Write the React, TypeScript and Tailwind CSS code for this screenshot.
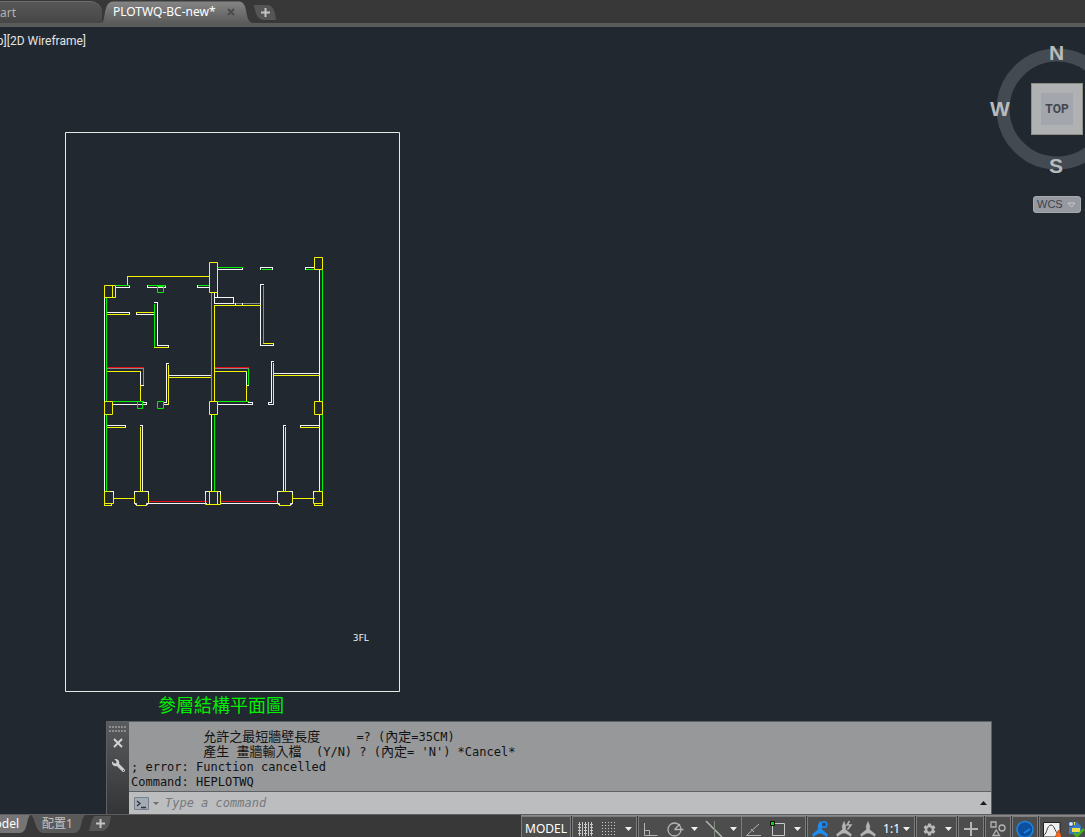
import React from 'react';
import { FaWrench } from 'react-icons/fa';
import { MdSettings } from 'react-icons/md';

const COLORS = {
  w: '#f4f4f4',
  y: '#f4f400',
  g: '#00f000',
  r: '#e80c14',
  s: '#8a8d90',
};

type Tone = keyof typeof COLORS;

// x1, y1, x2, y2 in drawing units
const WALLS: Record<Tone, number[][]> = {
  s: [
    [106, 368, 143, 368], [214, 368, 248, 368], [233, 303, 260, 303],
  ],
  r: [
    [106, 367, 143, 367], [214, 367, 248, 367], [148, 501, 206, 501], [220, 501, 277, 501],
  ],
  w: [
    [116, 287, 129, 287], [129, 285, 129, 287],
    [147, 287, 165, 287], [147, 285, 147, 287], [165, 285, 165, 287],
    [197, 287, 209, 287], [197, 285, 197, 287],
    [104, 297, 104, 401], [104, 414, 104, 491],
    [106, 312, 129, 312], [129, 312, 129, 314],
    [136, 314, 154, 314], [136, 312, 136, 314],
    [154, 302, 157, 302], [157, 302, 157, 345], [157, 345, 168, 345], [168, 345, 168, 347],
    [140, 371, 140, 385], [140, 385, 143, 385],
    [166, 363, 168, 363], [166, 363, 166, 402], [164, 402, 166, 402], [164, 404, 168, 404],
    [168, 375, 211, 375],
    [113, 404, 146, 404], [143, 402, 146, 402], [146, 402, 146, 404],
    [106, 425, 125, 425], [125, 425, 125, 427],
    [140, 425, 142, 425], [142, 425, 142, 491],
    [148, 503, 206, 503], [220, 503, 277, 503],
    [211, 414, 211, 491],
    [218, 269, 242, 269], [242, 267, 242, 269],
    [260, 267, 272, 267], [260, 267, 260, 269], [272, 267, 272, 269],
    [305, 267, 314, 267], [305, 267, 305, 269],
    [260, 284, 263, 284], [260, 284, 260, 345], [260, 345, 273, 345], [273, 343, 273, 345],
    [214, 292, 214, 303], [217, 292, 217, 297], [214, 297, 233, 297], [233, 297, 233, 303], [214, 303, 233, 303],
    [235, 303, 235, 305], [242, 303, 242, 305],
    [246, 371, 246, 385], [246, 385, 248, 385],
    [218, 404, 252, 404], [248, 402, 252, 402], [252, 402, 252, 404],
    [271, 361, 273, 361], [271, 361, 271, 402], [268, 402, 271, 402], [268, 402, 268, 404], [268, 404, 273, 404],
    [273, 373, 319, 373],
    [319, 270, 319, 401], [319, 414, 319, 491],
    [300, 425, 319, 425], [300, 425, 300, 427],
    [283, 425, 285, 425], [283, 425, 283, 491],
  ],
  y: [
    [127, 276, 209, 276], [127, 276, 127, 285],
    [112, 285, 112, 297],
    [106, 314, 129, 314], [136, 312, 154, 312], [154, 347, 168, 347],
    [106, 371, 140, 371], [140, 385, 140, 401],
    [168, 365, 168, 404], [168, 377, 211, 377],
    [106, 427, 125, 427], [140, 427, 140, 491],
    [113, 498, 134, 498], [293, 498, 314, 498],
    [214, 305, 260, 305], [214, 305, 214, 401],
    [214, 371, 246, 371], [246, 385, 246, 401],
    [263, 343, 273, 343], [273, 363, 273, 404], [273, 375, 319, 375],
    [300, 427, 319, 427], [285, 427, 285, 491],
    [104, 503, 104, 505], [104, 505, 111, 505], [111, 503, 111, 505],
    [314, 503, 314, 505], [314, 505, 322, 505], [322, 503, 322, 505],
  ],
  g: [
    [116, 285, 129, 285], [148, 285, 165, 285], [198, 285, 209, 285],
    [106, 297, 106, 401], [106, 414, 106, 491],
    [154, 304, 154, 346], [143, 369, 143, 384],
    [113, 401, 143, 401], [218, 401, 248, 401],
    [211, 292, 211, 401], [214, 414, 214, 491],
    [218, 267, 242, 267], [262, 269, 271, 269], [306, 269, 314, 269],
    [263, 286, 263, 342], [248, 369, 248, 384],
    [322, 270, 322, 401], [322, 414, 322, 491],
  ],
};

// x, y, width, height
const COLUMNS = [
  [104, 285, 11, 12], [209, 262, 8, 30], [314, 257, 8, 12],
  [104, 401, 8, 13], [209, 401, 8, 13], [314, 401, 8, 13],
  [104, 491, 9, 12], [209, 491, 8, 13], [205, 491, 15, 13], [313, 491, 9, 12],
];
const DUCTS = [[157, 286, 6, 6], [137, 401, 5, 7], [157, 401, 6, 7]];

const linePath = (segs: number[][]) => segs.map(([a, b, c, d]) => `M${a} ${b}L${c} ${d}`).join('');
const rectPath = (rects: number[][]) => rects.map(([x, y, w, h]) => `M${x} ${y}h${w}v${h}h${-w}z`).join('');

const FloorPlan: React.FC = () => (
  <svg className="absolute left-[64px] top-[104px] h-[590px] w-[338px]" viewBox="64 131 338 590" fill="none">
    <g transform="translate(.5 .5)">
      <path d="M65 132H399V691H65Z" stroke="#e8e8e8" />
      {(Object.keys(WALLS) as Tone[]).map((tone) => (
        <path key={tone} d={linePath(WALLS[tone])} stroke={COLORS[tone]} strokeLinecap="square" />
      ))}
      <path d={rectPath(COLUMNS)} stroke={COLORS.y} />
      <path d={rectPath(DUCTS)} stroke={COLORS.g} />
      <path d="M134 491H148V503L146 505H136L134 503ZM277 491H292V503L290 505H279L277 503Z" stroke={COLORS.y} />
      <path
        d="M134 494V491H137M145 491H148V494M134 502V503H136V505M148 502V503H146V505M277 494V491H280M289 491H292V494M277 502V503H279V505M292 502V503H290V505M205 494V491H208M218 491H220V494M110 491H113V494M313 494V491H315"
        stroke={COLORS.w}
      />
    </g>
    <text x="353" y="641" fill="#f0f0f0" fontSize="9" className="font-['DejaVu_Sans_Mono',monospace]">
      3FL
    </text>
    <text x="158" y="712" fill="#00f000" fontSize="18" className="font-['Noto_Sans_CJK_TC',sans-serif]">
      參層結構平面圖
    </text>
  </svg>
);

const ViewCube: React.FC = () => {
  const dir = "absolute font-['Liberation_Sans',sans-serif] text-[21px] leading-5 font-bold text-[#b9bbbd]";
  return (
    <div className="absolute right-0 top-3 h-44 w-24 overflow-hidden">
      <svg className="absolute left-2 top-2 h-[124px] w-[124px]" viewBox="0 0 124 124" fill="none">
        <circle cx="60" cy="62" r="54" stroke="#444a51" strokeWidth="13" />
      </svg>
      <button className={`${dir} left-[60px] top-1`}>N</button>
      <button className={`${dir} left-[1px] top-[60px]`}>W</button>
      <button className={`${dir} left-[60px] top-[117px]`}>S</button>
      <button className="absolute left-[42px] top-11 flex size-[52px] items-center justify-center border border-[#8c9184] bg-[#b0b1b2]">
        <span className="flex size-8 items-center justify-center bg-[#a3a6ac] font-['Roboto',sans-serif] text-xs font-bold text-[#42464f]">
          TOP
        </span>
      </button>
      <button className="absolute left-11 top-[157px] flex h-[17px] w-12 items-center gap-1 rounded bg-[#96999f] pl-1 font-['Liberation_Sans',sans-serif] text-[11px] text-[#3f434c] ring-1 ring-inset ring-[#a5a8ac]">
        WCS
        <svg className="h-2 w-[9px]" viewBox="0 0 9 8" fill="none">
          <path d="M1 2H8L4.500 6Z" stroke="#c5cad2" />
        </svg>
      </button>
    </div>
  );
};

const DropArrow: React.FC<{ label: string }> = ({ label }) => (
  <button aria-label={label} className="flex w-[15px] items-center justify-center">
    <svg className="h-1 w-[7px]" viewBox="0 0 7 4" fill="#f0f0f0">
      <path d="M0 0H7L3.500 4Z" />
    </svg>
  </button>
);

const Tool: React.FC<{ label: string; children: React.ReactNode }> = ({ label, children }) => (
  <button aria-label={label} className="flex w-6 items-center justify-center">
    {children}
  </button>
);

const Group: React.FC<{ children: React.ReactNode }> = ({ children }) => (
  <div className="flex shrink-0 border border-[#7d7d7d] bg-[#4d4d4d]">{children}</div>
);

const Icon: React.FC<{ children: React.ReactNode; color?: string }> = ({ children, color = '#b4b4b4' }) => (
  <svg className="size-[18px] shrink-0" viewBox="0 0 18 18" fill="none" stroke={color}>
    {children}
  </svg>
);

const FIGURE = 'M9 1.500L10.800 6L10.500 9.500L16.500 14.500L15.500 16.500C13 14.500 11 13 9 13C7 13 5 14.500 2.500 16.500L1.500 14.500L7.500 9.500L7.200 6Z';

const StatusTools: React.FC = () => (
  <div className="-mr-1 ml-auto flex h-[27px] shrink-0 gap-px border-t border-[#8a8a8a]">
    <Group>
      <button className="w-12 text-center font-['Noto_Sans',sans-serif] text-xs text-white">MODEL</button>
    </Group>
    <Group>
      <Tool label="Grid">
        <Icon color="#c8c8c8">
          <path d="M3.500 2V16M6.500 2V16M9.500 2V16M12.500 2V16M15.500 2V16" />
          <path d="M2 4.500H17M2 7.500H17M2 10.500H17M2 13.500H17" strokeDasharray="1 1" />
        </Icon>
      </Tool>
      <Tool label="Snap">
        <Icon color="#c8c8c8">
          <path d="M2 2.500H16M2 5.500H16M2 8.500H16M2 11.500H16M2 14.500H16" strokeDasharray="1 2" />
        </Icon>
      </Tool>
      <DropArrow label="Snap settings" />
    </Group>
    <Group>
      <Tool label="Ortho">
        <Icon><path d="M2.500 3V15.500H15.500M2.500 10.500H7.500V15.500" /></Icon>
      </Tool>
      <Tool label="Polar tracking">
        <Icon>
          <circle cx="8.500" cy="9.500" r="6.500" strokeWidth="1.300" />
          <path d="M8.500 9.500H17.500M8.500 9.500L14 4" strokeWidth="1.300" />
        </Icon>
      </Tool>
      <DropArrow label="Polar settings" />
      <Tool label="Isometric drafting">
        <Icon>
          <path d="M1 1L17 17" strokeWidth="1.500" />
          <path d="M9.500 1V17" stroke="#7c8f7c" />
        </Icon>
      </Tool>
      <DropArrow label="Isometric settings" />
      <div className="w-px bg-[#7d7d7d]" />
      <Tool label="Object snap tracking">
        <Icon><path d="M1.500 15.500H16M1.500 15.500L14 4M6 9L9 12" /></Icon>
      </Tool>
      <Tool label="Object snap">
        <Icon>
          <path d="M3.500 3.500H15.500V15.500H3.500Z" stroke="#c8c8c8" />
          <path d="M1.500 1.500H5.500V5.500H1.500Z" fill="#00e000" stroke="#101010" />
        </Icon>
      </Tool>
      <DropArrow label="Object snap settings" />
    </Group>
    <Group>
      <Tool label="Annotation visibility">
        <Icon color="#1e8cf0">
          <path d={FIGURE} fill="#1e8cf0" />
          <circle cx="13" cy="4.500" r="2.800" fill="#2b4a70" strokeWidth="1.500" />
        </Icon>
      </Tool>
      <Tool label="Auto scale">
        <Icon>
          <path d={FIGURE} fill="#b4b4b4" strokeWidth=".5" />
          <path d="M14.500 1L12 5H16L12.500 9.500" strokeWidth="1.500" />
        </Icon>
      </Tool>
      <Tool label="Annotation scale">
        <Icon><path d={FIGURE} fill="#b4b4b4" strokeWidth=".5" /></Icon>
      </Tool>
      <button className="flex w-[34px] items-center justify-end gap-[3px] pr-1 font-['Noto_Sans',sans-serif] text-xs text-white">
        1:1
        <svg className="h-1 w-[7px]" viewBox="0 0 7 4" fill="#f0f0f0">
          <path d="M0 0H7L3.500 4Z" />
        </svg>
      </button>
    </Group>
    <Group>
      <Tool label="Workspace"><MdSettings size={15} className="text-[#b8b8b8]" /></Tool>
      <DropArrow label="Workspace settings" />
    </Group>
    <Group>
      <Tool label="Annotation monitor">
        <Icon><path d="M9 2V16M2 9H16" strokeWidth="2" /></Icon>
      </Tool>
    </Group>
    <Group>
      <Tool label="Isolate objects">
        <Icon>
          <path d="M2 2H7V7H2ZM4 15.500H10.500L7.200 10Z" strokeWidth="1.300" />
          <circle cx="13" cy="8" r="3" strokeWidth="1.300" />
        </Icon>
      </Tool>
    </Group>
    <Group>
      <Tool label="Hardware acceleration">
        <Icon color="#1a86e8">
          <circle cx="9" cy="9.500" r="8" fill="#0c4f9e" strokeWidth="1.500" />
          <path d="M8 13L14 9" strokeWidth="1.800" />
        </Icon>
      </Tool>
    </Group>
    <Group>
      <Tool label="System variable monitor">
        <Icon color="#444">
          <path d="M.5 2.500H17V17H.5Z" fill="#f0f0f0" stroke="#222" />
          <path d="M1 15C4 14 4 5 8 5C12 5 12 14 17 15" />
          <path d="M15.500 10L19 17.500H12Z" fill="#f06a20" stroke="#d05010" />
        </Icon>
      </Tool>
      <Tool label="Trusted digital signature">
        <Icon>
          <path d="M2 2H10L14 6V14H2Z" fill="#3979c4" stroke="none" />
          <path d="M2 5H8V2H2ZM5 8H13V12H5Z" fill="#f1dc4c" stroke="none" />
          <circle cx="4" cy="4" r="2.500" fill="#d9e5f4" stroke="#1b4479" />
          <path d="M7 13L10 16L17 9" stroke="#42b51c" strokeWidth="2.500" />
        </Icon>
      </Tool>
    </Group>
  </div>
);

const CommandWindow: React.FC = () => (
  <section className="absolute bottom-0 left-[106px] right-[93px] flex border border-b-0 border-[#5e6164] bg-[#979899]">
    <div className="flex w-[22px] shrink-0 flex-col items-center bg-gradient-to-b from-[#595b5c] to-[#343536] pt-1">
      <svg className="h-[6px] w-[18px]" viewBox="0 0 18 6" stroke="#8c8e90" strokeWidth="2">
        <path d="M0 1H18M0 5H18" strokeDasharray="2 1" />
      </svg>
      <button aria-label="Close" className="mt-[3px] flex h-4 items-center">
        <svg className="size-[10px]" viewBox="0 0 10 10" stroke="#d4d4d4" strokeWidth="2">
          <path d="M1 1L9 9M9 1L1 9" />
        </svg>
      </button>
      <button aria-label="Customize" className="mt-2">
        <FaWrench size={13} className="-scale-x-100 text-[#cfcfcf]" />
      </button>
    </div>
    <div className="min-w-0 flex-1 font-['DejaVu_Sans_Mono','Noto_Sans_CJK_TC',monospace] text-xs">
      <div className="overflow-hidden whitespace-pre px-[2px] pt-[7px] pb-[2px] leading-[15px] text-[#101214]">
        <p className="h-[15px]">
          {'          '}<span className="text-[13px]">允許之最短牆壁長度</span>{'     =? ('}<span className="text-[13px]">內定</span>=35CM)
        </p>
        <p className="h-4">
          {'          '}<span className="text-[13px]">產生</span> <span className="text-[13px]">畫牆輸入檔</span>{'  (Y/N) ? ('}<span className="text-[13px]">內定</span>{"= 'N') *Cancel*"}
        </p>
        <p className="h-[15px]">; error: Function cancelled</p>
        <p className="-mb-px h-[15px]">Command: HEPLOTWQ</p>
      </div>
      <div className="flex h-[23px] items-center border-t border-[#5e6164] bg-[#bbbdbf] pl-[5px] pr-1">
        <button aria-label="Recent commands" className="flex items-center gap-1">
          <svg className="size-[15px]" viewBox="0 0 15 15" fill="none">
            <path d="M.5 1.500H14.500V13.500H.5Z" fill="#a3abb5" stroke="#77808b" />
            <path d="M3 5L6 7.500L3 10M7 11.500H12" stroke="#30363e" strokeWidth="1.300" />
          </svg>
          <svg className="h-[3px] w-[6px]" viewBox="0 0 6 3" fill="#6a6c6e">
            <path d="M0 0H6L3 3Z" />
          </svg>
        </button>
        <input
          aria-label="Command line"
          placeholder="Type a command"
          className="ml-[6px] min-w-0 flex-1 bg-transparent italic text-black outline-none placeholder:text-[#77797b]"
        />
        <button aria-label="Show history">
          <svg className="h-1 w-[7px]" viewBox="0 0 7 4" fill="#1a1a1a">
            <path d="M0 4H7L3.500 0Z" />
          </svg>
        </button>
      </div>
    </div>
  </section>
);

const PlusIcon: React.FC = () => (
  <svg className="relative size-[9px]" viewBox="0 0 9 9" stroke="#c4c4c4" strokeWidth="2">
    <path d="M4.500 0V9M0 4.500H9" />
  </svg>
);

const FileTabs: React.FC = () => (
  <header className="flex h-[27px] shrink-0 items-end border-b-4 border-[#5b5b5b] bg-[#383838] font-['Noto_Sans',sans-serif] text-xs">
    <button className="flex h-[22px] w-[102px] items-center rounded-tr-xl border-t border-[#6e6e6e] bg-gradient-to-b from-[#575757] to-[#464646] text-[#b0b0b0]">
      <span className="flex w-4 justify-end overflow-hidden">Start</span>
    </button>
    <div className="relative flex h-[22px] w-[150px] items-center justify-between pl-[11px] pr-[17px]">
      <svg className="absolute inset-0 h-full w-full" viewBox="0 0 150 22" preserveAspectRatio="none">
        <defs>
          <linearGradient id="tab" x2="0" y2="1">
            <stop stopColor="#858585" />
            <stop offset="1" stopColor="#5b5b5b" />
          </linearGradient>
        </defs>
        <path d="M0 22C4 19 1 1 11 .5H137C147 1 142 19 150 22Z" fill="url(#tab)" />
      </svg>
      <button className="relative text-white">PLOTWQ-BC-new*</button>
      <button aria-label="Close drawing" className="relative">
        <svg className="size-2" viewBox="0 0 8 8" stroke="#4a4a4a" strokeWidth="2">
          <path d="M1 1L7 7M7 1L1 7" />
        </svg>
      </button>
    </div>
    <button aria-label="New drawing" className="relative mb-[3px] ml-[2px] flex h-[15px] w-[22px] items-center justify-center">
      <svg className="absolute inset-0 h-full w-full" viewBox="0 0 22 15">
        <path d="M0 0H14C19 1 21 6 22 15H9C3 14 1 7 0 0Z" fill="#555" />
      </svg>
      <PlusIcon />
    </button>
  </header>
);

const LayoutTabs: React.FC = () => (
  <nav className="flex items-start font-['Noto_Sans','Noto_Sans_CJK_TC',sans-serif] text-xs">
    <button className="relative flex h-[18px] w-[30px] items-center text-white">
      <svg className="absolute inset-0 h-full w-full" viewBox="0 0 30 18" preserveAspectRatio="none">
        <path d="M0 0H30C26 5 28 17 20 18H0Z" fill="#757575" />
      </svg>
      <span className="relative flex w-[19px] justify-end overflow-hidden">Model</span>
    </button>
    <button className="relative flex h-[18px] w-[55px] items-center justify-center text-[#c4c4c4]">
      <svg className="absolute inset-0 h-full w-full" viewBox="0 0 55 18" preserveAspectRatio="none">
        <path d="M1 0H55C50 5 53 17 44 18H13C5 17 6 4 1 0Z" fill="#595959" />
      </svg>
      <span className="relative">配置1</span>
    </button>
    <button aria-label="New layout" className="relative ml-1 flex h-[17px] w-[22px] items-center justify-center">
      <svg className="absolute inset-0 h-full w-full" viewBox="0 0 22 17">
        <path d="M6 1H22C21 9 19 15 13 16H0C2 8 3 2 6 1Z" fill="#555" />
      </svg>
      <PlusIcon />
    </button>
  </nav>
);

const App: React.FC = () => (
  <div className="flex h-screen flex-col overflow-hidden bg-[#212830]">
    <FileTabs />
    <main className="relative min-h-0 flex-1 overflow-hidden">
      <p className="flex w-[86px] justify-end overflow-hidden pt-[5px] font-['Roboto',sans-serif] text-xs leading-[18px] whitespace-nowrap text-[#e4e4e4]">
        [-][Top][2D Wireframe]
      </p>
      <FloorPlan />
      <ViewCube />
      <CommandWindow />
    </main>
    <footer className="flex h-[23px] shrink-0 items-start overflow-hidden border-t border-[#5c5e60] bg-[#383838]">
      <LayoutTabs />
      <StatusTools />
    </footer>
  </div>
);

export default App;
